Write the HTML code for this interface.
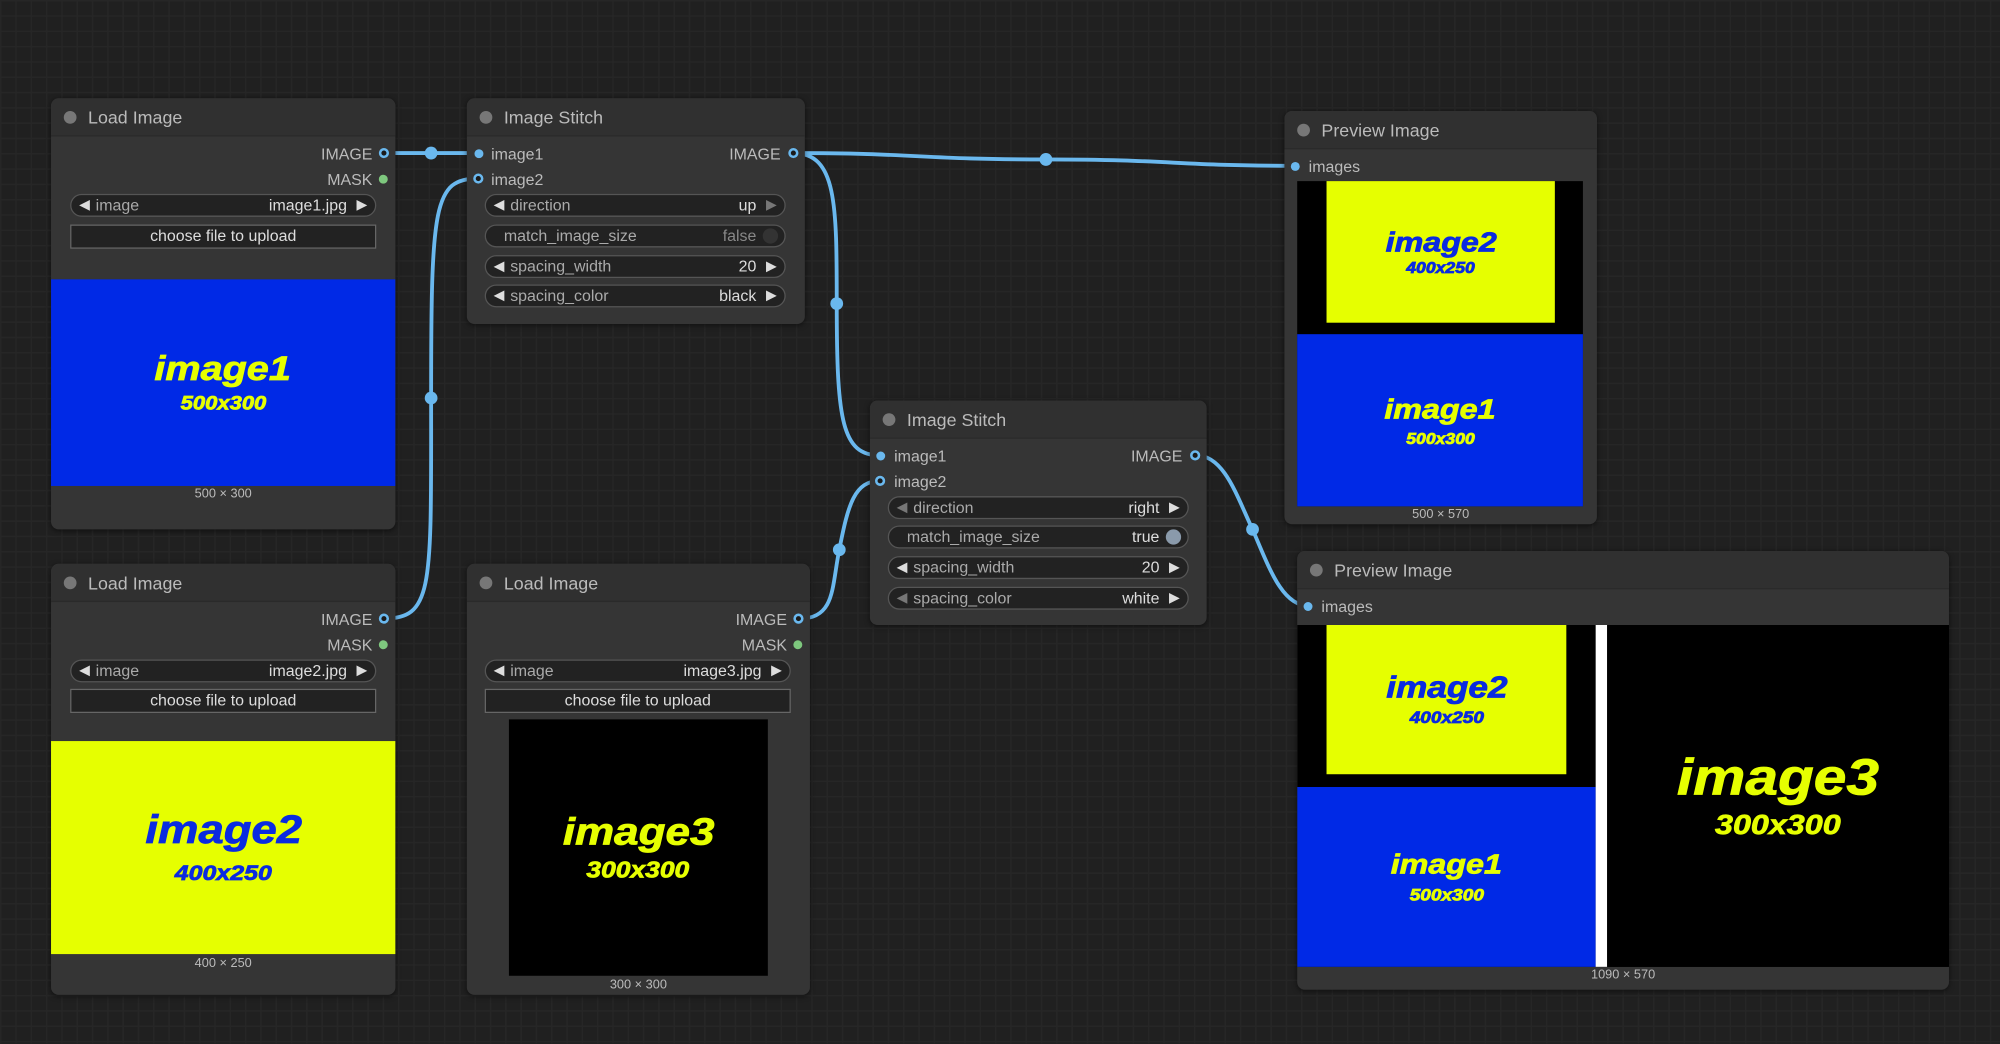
<!DOCTYPE html>
<html><head><meta charset="utf-8"><style>
html,body{margin:0;padding:0;width:2000px;height:1044px;overflow:hidden;background:#222;}
#w{position:absolute;left:0;top:0;width:1568px;height:818px;transform:scale(1.27551);transform-origin:0 0;
background-color:#202020;
background-image:linear-gradient(#262626 1px,transparent 1px),linear-gradient(90deg,#262626 1px,transparent 1px);
background-size:12px 12px;font-family:"Liberation Sans",sans-serif;}
.n{position:absolute;background:#353535;border-radius:6px;box-shadow:0 1px 4px rgba(0,0,0,.5);overflow:hidden}
.t{position:absolute;left:0;right:0;top:0;height:30px;background:#303030;border-bottom:1px solid #2a2a2a;color:#bbb;font-size:14px;line-height:30px;padding-left:29px;box-sizing:border-box}
.t:before{content:"";position:absolute;left:10px;top:10px;width:10px;height:10px;border-radius:50%;background:#777}
.a{position:absolute;font-size:12.5px;color:#bbb;line-height:14px}
.d{position:absolute;width:7px;height:7px;border-radius:50%;background:#6ab8ee}
.g{background:#7ec87e}
.ring{background:#1a1a1a;border:2px solid #6ab8ee;width:4px;height:4px}
.p{position:absolute;height:18px;border:1px solid #555;border-radius:10px;background:#222;box-sizing:border-box;font-size:12.5px;line-height:16px;color:#aaa}
.p .l{position:absolute;left:19px}
.p .v{position:absolute;right:22px;color:#ddd}
.p .la{position:absolute;left:6px;color:#ddd;font-size:11px}
.p .ra{position:absolute;right:6px;color:#ddd;font-size:11px}
.p .dim{color:#777}
.b{position:absolute;height:19px;border:1px solid #666;background:#222;box-sizing:border-box;color:#ddd;font-size:12.5px;line-height:17px;text-align:center}
.im{position:absolute;display:flex;flex-direction:column;align-items:center;justify-content:center;font-weight:900;font-style:italic;letter-spacing:0px;line-height:1.05}
.im span{display:inline-block;transform:scaleX(1.15);-webkit-text-stroke:0.6px currentColor}
.cap{position:absolute;font-size:10px;color:#bbb;text-align:center}
</style></head><body><div id="w">

<svg style="position:absolute;left:0;top:0" width="1568" height="818">
<g fill="none" stroke="#6ab8ee" stroke-width="3">
<path d="M301 120 L375 120"/>
<path d="M301 485 C340 485 338 460 338 312 C338 160 340 140 375 140"/>
<path d="M622 120 C656 120 656 160 656 238 C656 330 660 357 690 357"/>
<path d="M627 485 C655 485 652 460 658 431 C665 395 670 377 690 377"/>
<path d="M622 120 C720 120 720 125 820 125 C920 125 920 130 1016 130"/>
<path d="M938 357 C960 357 970 390 982 415 C995 445 1005 475 1026 475"/>
</g>
<g fill="#6ab8ee"><circle cx="338" cy="120" r="5"/><circle cx="338" cy="312" r="5"/><circle cx="656" cy="238" r="5"/><circle cx="658" cy="431" r="5"/><circle cx="820" cy="125" r="5"/><circle cx="982" cy="415" r="5"/></g>
</svg>

<div class="n" style="left:40px;top:77px;width:270px;height:338px">
<div class="t">Load Image</div>
<div class="a" style="right:18px;top:37px">IMAGE</div><div class="d ring" style="right:5px;top:39px"></div>
<div class="a" style="right:18px;top:57px">MASK</div><div class="d g" style="right:6px;top:60px"></div>
<div class="p" style="left:15px;top:75px;width:240px"><span class="la">◀</span><span class="l">image</span><span class="v">image1.jpg</span><span class="ra">▶</span></div>
<div class="b" style="left:15px;top:99px;width:240px">choose file to upload</div>
<div class="im" style="left:0;top:142px;width:270px;height:162px;background:#0029e6;color:#e6ff00"><span style="font-size:27px">image1</span><span style="font-size:15px;margin-top:6px">500x300</span></div>
<div class="cap" style="left:0;width:270px;top:305px">500 × 300</div>
</div>

<div class="n" style="left:40px;top:442px;width:270px;height:338px">
<div class="t">Load Image</div>
<div class="a" style="right:18px;top:37px">IMAGE</div><div class="d ring" style="right:5px;top:39px"></div>
<div class="a" style="right:18px;top:57px">MASK</div><div class="d g" style="right:6px;top:60px"></div>
<div class="p" style="left:15px;top:75px;width:240px"><span class="la">◀</span><span class="l">image</span><span class="v">image2.jpg</span><span class="ra">▶</span></div>
<div class="b" style="left:15px;top:98px;width:240px">choose file to upload</div>
<div class="im" style="left:0;top:139px;width:270px;height:167px;background:#e6ff00;color:#0a2be0"><span style="font-size:31px">image2</span><span style="font-size:17px;margin-top:8px">400x250</span></div>
<div class="cap" style="left:0;width:270px;top:308px">400 × 250</div>
</div>

<div class="n" style="left:366px;top:442px;width:269px;height:338px">
<div class="t">Load Image</div>
<div class="a" style="right:18px;top:37px">IMAGE</div><div class="d ring" style="right:5px;top:39px"></div>
<div class="a" style="right:18px;top:57px">MASK</div><div class="d g" style="right:6px;top:60px"></div>
<div class="p" style="left:14px;top:75px;width:240px"><span class="la">◀</span><span class="l">image</span><span class="v">image3.jpg</span><span class="ra">▶</span></div>
<div class="b" style="left:14px;top:98px;width:240px">choose file to upload</div>
<div class="im" style="left:33px;top:122px;width:203px;height:201px;background:#000;color:#e6ff00"><span style="font-size:30px">image3</span><span style="font-size:18px;margin-top:4px">300x300</span></div>
<div class="cap" style="left:0;width:269px;top:325px">300 × 300</div>
</div>

<div class="n" style="left:366px;top:77px;width:265px;height:177px">
<div class="t">Image Stitch</div>
<div class="d" style="left:6px;top:40px"></div><div class="a" style="left:19px;top:37px">image1</div>
<div class="d ring" style="left:5px;top:59px"></div><div class="a" style="left:19px;top:57px">image2</div>
<div class="a" style="right:19px;top:37px">IMAGE</div><div class="d ring" style="right:5px;top:39px"></div>
<div class="p" style="left:14px;top:75px;width:236px"><span class="la">◀</span><span class="l">direction</span><span class="v">up</span><span class="ra dim">▶</span></div>
<div class="p" style="left:14px;top:99px;width:236px"><span class="l" style="left:14px">match_image_size</span><span class="v dim" style="color:#888">false</span><span style="position:absolute;right:5px;top:2px;width:12px;height:12px;border-radius:50%;background:#333"></span></div>
<div class="p" style="left:14px;top:123px;width:236px"><span class="la">◀</span><span class="l">spacing_width</span><span class="v">20</span><span class="ra">▶</span></div>
<div class="p" style="left:14px;top:146px;width:236px"><span class="la">◀</span><span class="l">spacing_color</span><span class="v">black</span><span class="ra">▶</span></div>
</div>

<div class="n" style="left:682px;top:314px;width:264px;height:176px">
<div class="t">Image Stitch</div>
<div class="d" style="left:5px;top:40px"></div><div class="a" style="left:19px;top:37px">image1</div>
<div class="d ring" style="left:4px;top:59px"></div><div class="a" style="left:19px;top:57px">image2</div>
<div class="a" style="right:19px;top:37px">IMAGE</div><div class="d ring" style="right:5px;top:39px"></div>
<div class="p" style="left:14px;top:75px;width:236px"><span class="la dim">◀</span><span class="l">direction</span><span class="v">right</span><span class="ra">▶</span></div>
<div class="p" style="left:14px;top:98px;width:236px"><span class="l" style="left:14px">match_image_size</span><span class="v">true</span><span style="position:absolute;right:5px;top:2px;width:12px;height:12px;border-radius:50%;background:#8a9aab"></span></div>
<div class="p" style="left:14px;top:122px;width:236px"><span class="la">◀</span><span class="l">spacing_width</span><span class="v">20</span><span class="ra">▶</span></div>
<div class="p" style="left:14px;top:146px;width:236px"><span class="la dim">◀</span><span class="l">spacing_color</span><span class="v">white</span><span class="ra">▶</span></div>
</div>

<div class="n" style="left:1007px;top:87px;width:245px;height:324px">
<div class="t">Preview Image</div>
<div class="d" style="left:5px;top:40px"></div><div class="a" style="left:19px;top:37px">images</div>
<div style="position:absolute;left:10px;top:55px;width:224px;height:255px;background:#000">
<div class="im" style="left:23px;top:0;width:179px;height:111px;background:#e6ff00;color:#0a2be0"><span style="font-size:22px">image2</span><span style="font-size:12px;margin-top:3px">400x250</span></div>
<div class="im" style="left:0;top:120px;width:224px;height:135px;background:#0029e6;color:#e6ff00"><span style="font-size:22px">image1</span><span style="font-size:12px;margin-top:6px">500x300</span></div>
</div>
<div class="cap" style="left:0;width:245px;top:311px">500 × 570</div>
</div>

<div class="n" style="left:1017px;top:432px;width:511px;height:344px">
<div class="t">Preview Image</div>
<div class="d" style="left:5px;top:40px"></div><div class="a" style="left:19px;top:37px">images</div>
<div style="position:absolute;left:0;top:58px;width:511px;height:268px;background:#000">
<div class="im" style="left:23px;top:0;width:188px;height:117px;background:#e6ff00;color:#0a2be0"><span style="font-size:24px">image2</span><span style="font-size:13px;margin-top:4px">400x250</span></div>
<div class="im" style="left:0;top:127px;width:234px;height:141px;background:#0029e6;color:#e6ff00"><span style="font-size:22px">image1</span><span style="font-size:13px;margin-top:6px">500x300</span></div>
<div style="position:absolute;left:234px;top:0;width:9px;height:268px;background:#fff"></div>
<div class="im" style="left:243px;top:0;width:268px;height:268px;background:#000;color:#e6ff00"><span style="font-size:40px">image3</span><span style="font-size:22px;margin-top:4px">300x300</span></div>
</div>
<div class="cap" style="left:0;width:511px;top:327px">1090 × 570</div>
</div>

</div></body></html>
